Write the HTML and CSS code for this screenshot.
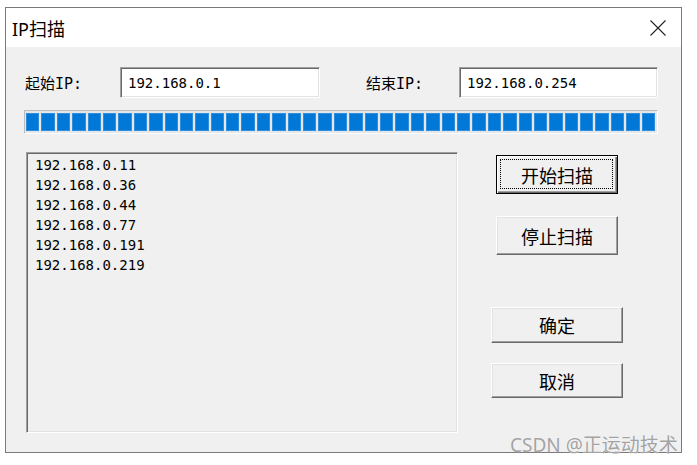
FILE: index.html
```html
<!DOCTYPE html>
<html>
<head>
<meta charset="utf-8">
<link rel="stylesheet" href="styles.css">
</head>
<body>
<div class="window">
  <div class="titlebar">
    <span class="title">IP扫描</span>
    <svg class="close" width="16" height="16" viewBox="0 0 16 16"><path d="M0.5 0.5 L15.5 15.5 M15.5 0.5 L0.5 15.5" stroke="#222" stroke-width="1.1" fill="none"/></svg>
  </div>
  <div class="client">
    <div class="row">
      <span class="lbl lbl1">起始IP:</span>
      <div class="edit e1">192.168.0.1</div>
      <span class="lbl lbl2">结束IP:</span>
      <div class="edit e2">192.168.0.254</div>
    </div>
    <div class="progress">
      <i></i><i></i><i></i><i></i><i></i><i></i><i></i><i></i><i></i><i></i>
      <i></i><i></i><i></i><i></i><i></i><i></i><i></i><i></i><i></i><i></i>
      <i></i><i></i><i></i><i></i><i></i><i></i><i></i><i></i><i></i><i></i>
      <i></i><i></i><i></i><i></i><i></i><i></i><i></i><i></i><i></i><i></i>
      <i></i>
    </div>
    <div class="main">
      <div class="list">
        <div>192.168.0.11</div>
        <div>192.168.0.36</div>
        <div>192.168.0.44</div>
        <div>192.168.0.77</div>
        <div>192.168.0.191</div>
        <div>192.168.0.219</div>
      </div>
      <div class="buttons">
        <div class="btn default b1"><span>开始扫描</span></div>
        <div class="btn b2"><span>停止扫描</span></div>
        <div class="btn b3"><span>确定</span></div>
        <div class="btn b4"><span>取消</span></div>
      </div>
    </div>
  </div>
</div>
<div class="watermark">CSDN @正运动技术</div>
</body>
</html>
```
FILE: styles.css
```css
* { box-sizing: border-box; margin: 0; padding: 0; }
html, body { width: 697px; height: 465px; overflow: hidden; }
body {
  background: #fff;
  padding: 7px 0 0 5px;
  position: relative;
  font-family: "DejaVu Sans Mono", "Noto Sans CJK SC", monospace;
  color: #000;
}
.window {
  width: 677px;
  height: 446px;
  border: 1px solid #7a7a7a;
  background: #f0f0f0;
  display: flex;
  flex-direction: column;
}
.titlebar {
  height: 39px;
  flex: none;
  background: #fff;
  display: flex;
  align-items: center;
  justify-content: space-between;
  padding: 0 15px 0 6px;
}
.title {
  font-family: "Noto Sans", "Noto Sans CJK SC", sans-serif;
  font-size: 18px;
  color: #000;
}
.close { display: block; margin-top: 1px; }
.client {
  flex: 1;
  padding: 20px 0 0 18px;
}
.row {
  display: flex;
  align-items: center;
  height: 31px;
}
.lbl { font-size: 15px; white-space: nowrap; }
.lbl1 { width: 96px; padding-left: 1px; }
.lbl2 { width: 93px; margin-left: 46px; }
.edit {
  height: 31px;
  background: #fff;
  border: 1px solid;
  border-color: #a0a0a0 #fff #fff #a0a0a0;
  box-shadow: inset 1px 1px 0 #696969, inset -1px -1px 0 #e3e3e3;
  padding-left: 7px;
  font-size: 14px;
  display: flex;
  align-items: center;
}
.e1 { width: 200px; }
.e2 { width: 199px; }
.progress {
  margin-top: 12px;
  width: 634px;
  height: 24px;
  background: #e6e6e6;
  border: 1px solid;
  border-color: #bcbcbc #fff #fff #bcbcbc;
  padding: 2px 2px 2px 1px;
  display: flex;
  gap: 2px;
}
.progress i {
  flex: 1;
  background: #0078d7;
  box-shadow: inset 0 0 0 1px #2f8fdf;
}
.main {
  margin-top: 18px;
  display: flex;
}
.list {
  width: 432px;
  height: 281px;
  margin-left: 2px;
  border: 1px solid;
  border-color: #a0a0a0 #fff #fff #a0a0a0;
  box-shadow: inset 1px 1px 0 #696969, inset -1px -1px 0 #e3e3e3;
  padding: 2px 0 0 8px;
  font-size: 14px;
  line-height: 20px;
}
.buttons {
  margin-left: 33px;
  width: 132px;
  display: flex;
  flex-direction: column;
  align-items: center;
}
.btn {
  position: relative;
  background: #f0f0f0;
  border: 1px solid;
  border-color: #fff #696969 #696969 #fff;
  box-shadow: inset -1px -1px 0 #a0a0a0, inset 1px 1px 0 #e3e3e3;
  display: flex;
  align-items: center;
  justify-content: center;
  font-family: "Noto Sans CJK SC", sans-serif;
  font-size: 18px;
  color: #000;
}
.btn.default {
  border-color: #000;
  box-shadow: inset 1px 1px 0 #fff, inset -1px -1px 0 #696969, inset -2px -2px 0 #a0a0a0;
}
.btn.default::after {
  content: "";
  position: absolute;
  top: 3px; left: 3px; right: 4px; bottom: 4px;
  border: 1px dotted #000;
}
.b1 { width: 122px; height: 39px; margin-top: 3px; }
.b2 { width: 122px; height: 39px; margin-top: 22px; }
.b3 { width: 132px; height: 36px; margin-top: 52px; }
.b4 { width: 132px; height: 35px; margin-top: 20px; }
.watermark {
  position: absolute;
  left: 510px;
  top: 430px;
  font-family: "Noto Sans", "Noto Sans CJK SC", sans-serif;
  font-size: 19px;
  color: #a3a3a3;
  text-shadow: 0 0 1px #fff;
  white-space: nowrap;
}
```
